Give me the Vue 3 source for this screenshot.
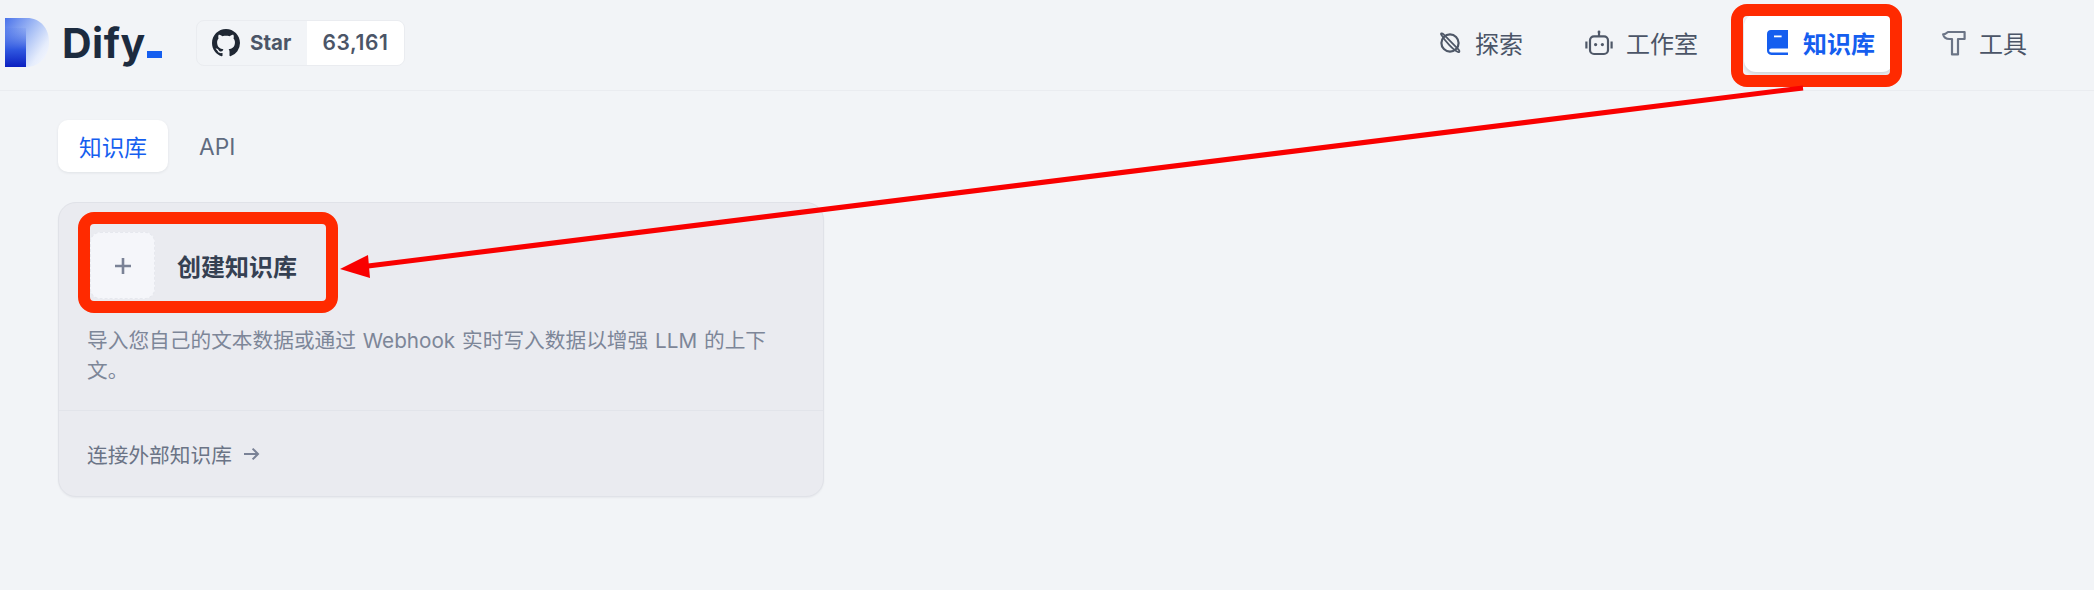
<script setup>
const navItems = [
  { id: 'explore', label: '探索' },
  { id: 'studio', label: '工作室' },
  { id: 'datasets', label: '知识库', active: true },
  { id: 'tools', label: '工具' }
]
</script>

<template>
  <div class="page">
    <header class="header">
      <div class="brand">
        <svg class="logo" width="45" height="50" viewBox="0 0 45 50">
          <defs>
            <linearGradient id="logoBack" x1="0" y1="0" x2="1" y2="0.75">
              <stop offset="0" stop-color="#4a72ea" />
              <stop offset="0.5" stop-color="#a6bef5" />
              <stop offset="0.85" stop-color="#e6edfc" />
              <stop offset="1" stop-color="#f2f5fd" />
            </linearGradient>
            <linearGradient id="logoStem" x1="0" y1="0" x2="0" y2="1">
              <stop offset="0" stop-color="#3f68e6" stop-opacity="0.1" />
              <stop offset="0.55" stop-color="#3058e0" />
              <stop offset="1" stop-color="#0a1fc0" />
            </linearGradient>
          </defs>
          <path d="M0 0H22C35 0 44 10 44 24C44 38 35 49 21 49H0Z" fill="url(#logoBack)" />
          <rect x="0" y="10" width="21" height="39" fill="url(#logoStem)" />
        </svg>
        <span class="wordmark">Dify<i class="cursor"></i></span>
      </div>
      <div class="stars">
        <div class="stars-label">
          <svg width="28" height="28" viewBox="0 0 16 16" fill="#1f2733">
            <path d="M8 0C3.58 0 0 3.58 0 8c0 3.54 2.29 6.53 5.47 7.59.4.07.55-.17.55-.38 0-.19-.01-.82-.01-1.49-2.01.37-2.53-.49-2.69-.94-.09-.23-.48-.94-.82-1.13-.28-.15-.68-.52-.01-.53.63-.01 1.08.58 1.23.82.72 1.21 1.87.87 2.33.66.07-.52.28-.87.51-1.07-1.78-.2-3.64-.89-3.64-3.95 0-.87.31-1.59.82-2.15-.08-.2-.36-1.02.08-2.12 0 0 .67-.21 2.2.82.64-.18 1.32-.27 2-.27s1.36.09 2 .27c1.53-1.04 2.2-.82 2.2-.82.44 1.1.16 1.92.08 2.12.51.56.82 1.27.82 2.15 0 3.07-1.87 3.75-3.65 3.95.29.25.54.73.54 1.48 0 1.07-.01 1.93-.01 2.2 0 .21.15.46.55.38A8.01 8.01 0 0 0 16 8c0-4.42-3.58-8-8-8z" />
          </svg>
          <span>Star</span>
        </div>
        <div class="stars-count">63,161</div>
      </div>
      <nav class="nav">
        <a v-for="item in navItems" :key="item.id" class="nav-item" :class="[item.id, { active: item.active }]">
          <svg v-if="item.id === 'explore'" width="24" height="24" viewBox="0 0 24 24" fill="none" stroke="#4f5868" stroke-width="2.2">
            <circle cx="12" cy="12" r="8.6" />
            <path d="M3.2 3.6C2.4 2.4 4 1.8 5.6 3.4L20.4 18.4C22 20 21.6 21.6 20 21C15 19 7 10 3.2 3.6Z" stroke-width="1.8" />
          </svg>
          <svg v-else-if="item.id === 'studio'" width="28" height="26" viewBox="0 0 28 26" fill="none" stroke="#4f5868" stroke-width="2.2">
            <rect x="5" y="6.4" width="18" height="17.6" rx="4" />
            <path d="M14 6V2" />
            <circle cx="14" cy="2" r="1.4" fill="#4f5868" stroke="none" />
            <path d="M1.4 11.6V18.4M26.6 11.6V18.4" />
            <circle cx="10.6" cy="14.6" r="1.6" fill="#4f5868" stroke="none" />
            <circle cx="17.4" cy="14.6" r="1.6" fill="#4f5868" stroke="none" />
          </svg>
          <svg v-else-if="item.id === 'datasets'" width="22" height="25" viewBox="0 0 22 25">
            <path d="M4 0H21V18.6H4.6C2.8 18.6 2.2 19.6 2.2 20.4C2.2 21.6 3 22.4 4.6 22.4H21V25H4.4C1.6 25 0 23 0 20.6V4C0 1.6 1.6 0 4 0Z" fill="#155eef" />
            <path d="M7 6.4H14.6" stroke="#fff" stroke-width="1.8" />
          </svg>
          <svg v-else width="24" height="26" viewBox="0 0 24 26" fill="none" stroke="#6b7486" stroke-width="2.2" stroke-linejoin="round">
            <path d="M6 2H22.6V9H16V24.4H10V9H7.4C4.4 9 2 7.6 1.2 4.4C3 4.4 4.4 3.4 6 2Z" />
          </svg>
          <span>{{ item.label }}</span>
        </a>
      </nav>
    </header>

    <main class="content">
      <div class="tabs">
        <div class="tab selected">知识库</div>
        <div class="tab">API</div>
      </div>

      <section class="card">
        <div class="card-top">
          <div class="create">
            <div class="plus-box">
              <svg width="20" height="20" viewBox="0 0 20 20" stroke="#7a8296" stroke-width="2.6">
                <path d="M10 2V18M2 10H18" />
              </svg>
            </div>
            <span class="create-title">创建知识库</span>
          </div>
          <p class="desc">导入您自己的文本数据或通过 Webhook 实时写入数据以增强 LLM 的上下文。</p>
        </div>
        <div class="card-foot">
          <span>连接外部知识库</span>
          <svg width="17" height="18" viewBox="0 0 17 18" fill="none" stroke="#7a8296" stroke-width="2">
            <path d="M1 9H15M9.6 3.6L15 9L9.6 14.4" />
          </svg>
        </div>
      </section>
    </main>

    <!-- red annotations drawn over the screenshot -->
    <div class="mark mark-nav"></div>
    <div class="mark mark-create"></div>
    <svg class="arrow" width="2094" height="590" viewBox="0 0 2094 590">
      <path d="M1803 88L360 267" stroke="#f90000" stroke-width="5" fill="none" />
      <path d="M340 269L368 255L370 278Z" fill="#f90000" />
    </svg>
  </div>
</template>

<style scoped>
.page {
  position: relative;
  width: 2094px;
  height: 590px;
  overflow: hidden;
  background: #f2f4f7;
  font-family: Inter, "Noto Sans CJK SC", sans-serif;
  color: #354052;
}

.header {
  display: flex;
  align-items: center;
  height: 91px;
  padding: 0 0 5px 5px;
  border-bottom: 1px solid #eaecf0;
  box-sizing: border-box;
}

.brand {
  display: flex;
  align-items: center;
  gap: 12px;
  width: 191px;
}

.logo {
  flex-shrink: 0;
}

.wordmark {
  display: flex;
  align-items: baseline;
  font-size: 41px;
  font-weight: 700;
  letter-spacing: 0.5px;
  line-height: 48px;
  color: #1c2b3f;
}

.cursor {
  display: inline-block;
  width: 15px;
  height: 7px;
  margin-left: 1px;
  background: #155eef;
}

.stars {
  display: flex;
  height: 46px;
  border: 1px solid #eaecf0;
  border-radius: 8px;
  overflow: hidden;
  box-sizing: border-box;
  font-size: 20.5px;
  font-weight: 700;
  color: #4b5567;
}

.stars-label {
  display: flex;
  align-items: center;
  gap: 10px;
  width: 110px;
  padding-left: 15px;
  box-sizing: border-box;
}

.stars-count {
  display: flex;
  align-items: center;
  justify-content: center;
  width: 97px;
  background: #fff;
  font-size: 21px;
  font-weight: 600;
  letter-spacing: 0.6px;
}

.nav {
  display: flex;
  align-items: center;
  gap: 22px;
  margin-left: auto;
  padding-right: 47px;
}

.nav-item {
  display: flex;
  align-items: center;
  height: 58px;
  padding: 0 20px;
  gap: 13px;
  font-size: 24px;
  color: #4b5567;
  border-radius: 12px;
}

.nav-item svg {
  flex-shrink: 0;
}

.nav-item.studio {
  margin-right: 4px;
}

.nav-item.active {
  width: 150px;
  margin-right: 6px;
  padding: 0 0 0 23px;
  gap: 14px;
  box-sizing: border-box;
  background: #fff;
  color: #155eef;
  font-weight: 600;
  box-shadow: 0 2px 4px rgba(16, 24, 40, 0.16);
}

.content {
  padding: 29px 0 0 58px;
}

.tabs {
  display: flex;
  align-items: center;
  gap: 31px;
  height: 52px;
}

.tab {
  display: flex;
  align-items: center;
  font-size: 22.7px;
  color: #5f6b80;
}

.tab.selected {
  height: 52px;
  padding: 0 21px;
  background: #fff;
  border-radius: 10px;
  color: #155eef;
  box-shadow: 0 1px 3px rgba(16, 24, 40, 0.08);
}

.card {
  display: flex;
  flex-direction: column;
  width: 766px;
  height: 295px;
  margin-top: 30px;
  box-sizing: border-box;
  background: #eaebf0;
  border: 1.5px solid #e0e2e8;
  border-radius: 18px;
  box-shadow: 0 1px 2px rgba(16, 24, 40, 0.05);
}

.card-top {
  height: 208px;
  padding: 29px 0 0 28px;
  box-sizing: border-box;
  border-bottom: 1px solid #e2e4ea;
}

.create {
  display: flex;
  align-items: center;
  gap: 22px;
  margin-left: 3px;
}

.plus-box {
  display: flex;
  align-items: center;
  justify-content: center;
  width: 65px;
  height: 67px;
  box-sizing: border-box;
  background: #f5f6fa;
  border: 1.5px dashed #e6e8ee;
  border-radius: 10px;
}

.create-title {
  font-size: 24px;
  font-weight: 600;
  color: #354052;
}

.desc {
  width: 690px;
  margin: 27px 0 0;
  font-size: 20.7px;
  line-height: 30px;
  word-spacing: 1px;
  color: #7d8698;
}

.card-foot {
  display: flex;
  align-items: center;
  flex: 1;
  gap: 11px;
  padding-left: 28px;
  font-size: 20.7px;
  color: #6b7486;
}

.mark {
  position: absolute;
  box-sizing: border-box;
  border: 12px solid #ff2a00;
  border-radius: 16px;
}

.mark-nav {
  left: 1731px;
  top: 4px;
  width: 171px;
  height: 83px;
}

.mark-create {
  left: 78px;
  top: 212px;
  width: 260px;
  height: 101px;
}

.arrow {
  position: absolute;
  left: 0;
  top: 0;
  pointer-events: none;
}
</style>
